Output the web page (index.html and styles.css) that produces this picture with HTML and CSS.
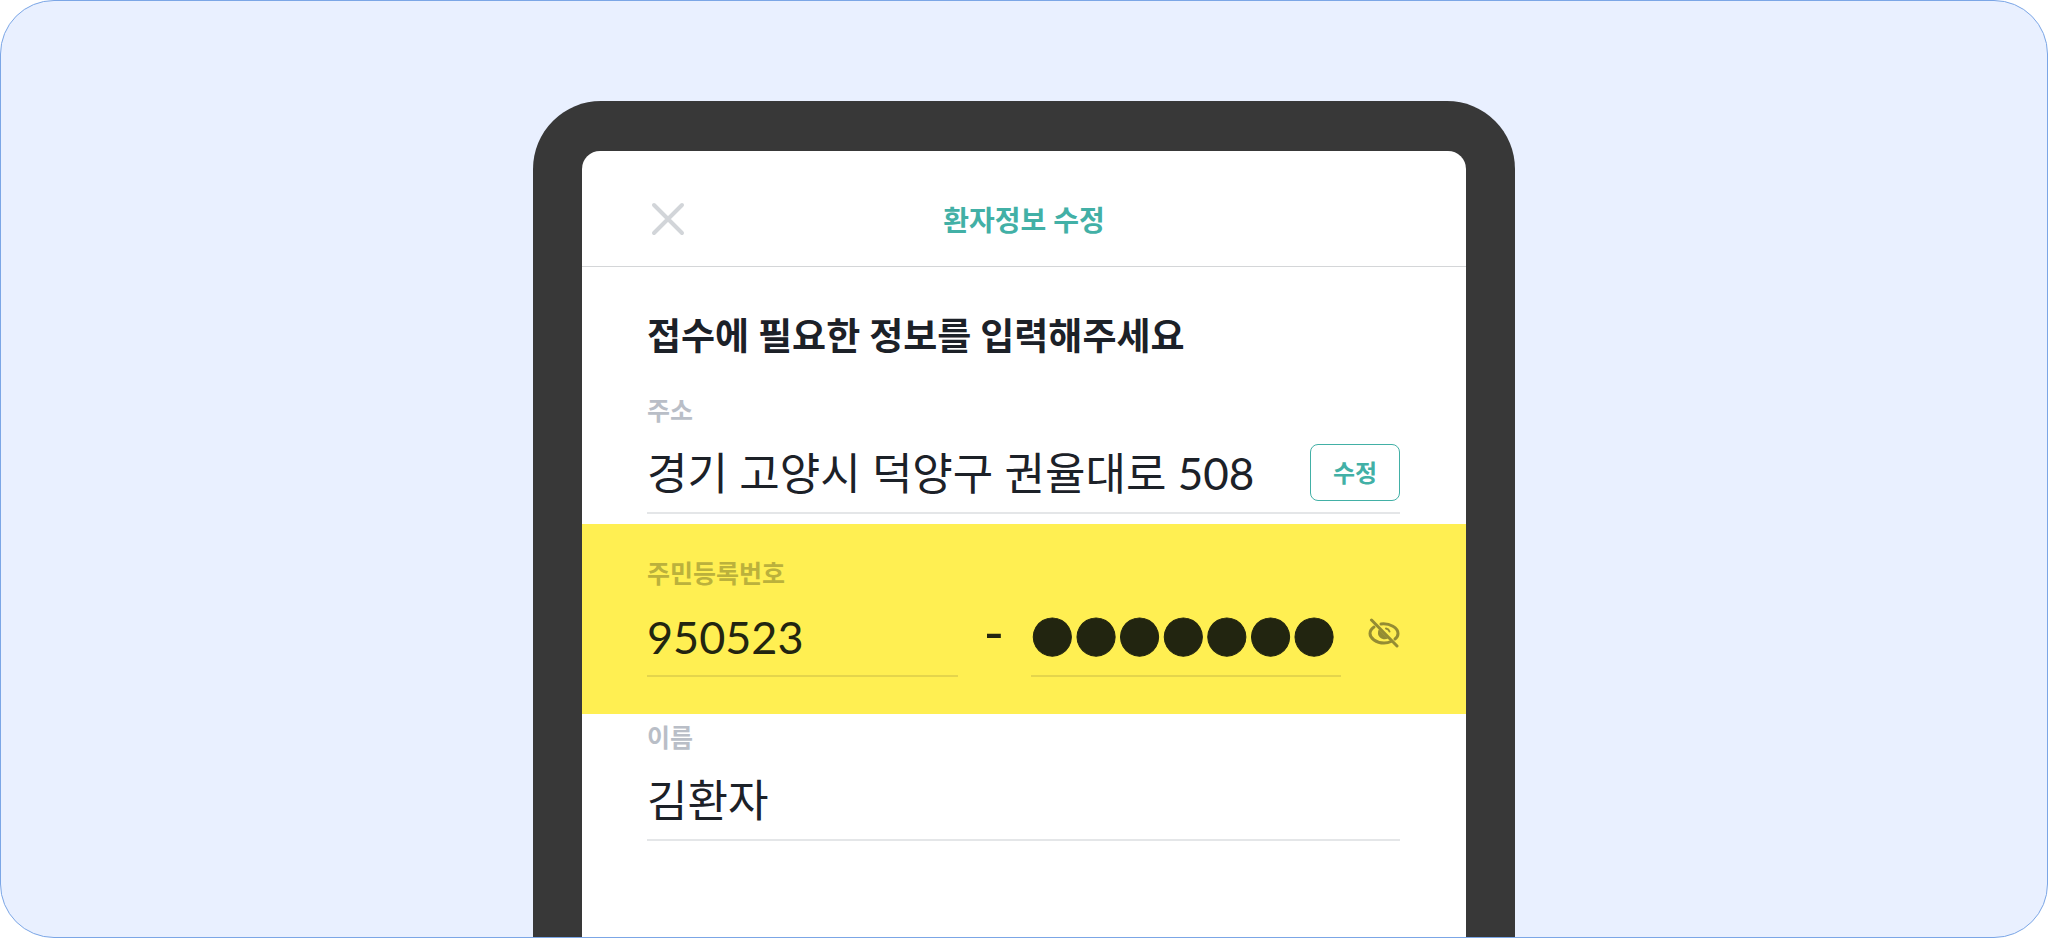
FILE: index.html
```html
<!DOCTYPE html>
<html lang="ko">
<head>
<meta charset="utf-8">
<meta name="viewport" content="width=device-width, initial-scale=1">
<title>환자정보 수정</title>
<link rel="stylesheet" href="styles.css">
</head>
<body>
<div class="stage">
  <main class="phone">
    <header class="topbar">
      <button type="button" class="close" aria-label="닫기">
        <svg width="34" height="34" viewBox="0 0 34 34" fill="none" stroke="#d2d5d9" stroke-width="4" stroke-linecap="round"><path d="M3 3l28 28M31 3L3 31"/></svg>
      </button>
      <h1>환자정보 수정</h1>
    </header>
    <form class="form">
      <h2>접수에 필요한 정보를 입력해주세요</h2>
      <div class="field">
        <label for="address">주소</label>
        <div class="row line">
          <input type="text" id="address" value="경기 고양시 덕양구 권율대로 508">
          <button type="button" class="edit">수정</button>
        </div>
      </div>
      <div class="field highlight">
        <label for="rrn-front">주민등록번호</label>
        <div class="row">
          <div class="part line"><input type="text" id="rrn-front" class="digits" value="950523"></div>
          <span class="dash">-</span>
          <div class="part line"><input type="text" class="masked" value="●●●●●●●" aria-label="주민등록번호 뒷자리"></div>
          <button type="button" class="eye" aria-label="번호 보기">
            <svg width="32" height="32" viewBox="0 0 32 32" fill="none" stroke="#948c33" stroke-width="3" stroke-linecap="round">
              <path d="M6 9C3 11 2 13 2 15.500C2 20 8 25 16 25C19 25 21 24.500 23 23.500"/>
              <path d="M13 6C22 5 30 10 30 15.500C30 18 29 19.500 27 21"/>
              <path d="M18 10.500C20 11 21 12 21.500 13.500" stroke-width="2"/>
              <path d="M11 11.500L20 20.500C15 23 10 19 10 15.500C10 14 10 12.500 11 11.500Z" fill="#948c33" stroke="none"/>
              <path d="M3.500 2L29 28"/>
            </svg>
          </button>
        </div>
      </div>
      <div class="field">
        <label for="name">이름</label>
        <div class="row line">
          <input type="text" id="name" value="김환자">
        </div>
      </div>
    </form>
  </main>
</div>
</body>
</html>
```
FILE: styles.css
```css
* { box-sizing: border-box; }
body {
  margin: 0;
  background: #fff;
  color: #1c2128;
  font-family: Lato, "Noto Sans CJK KR", sans-serif;
}
button { padding: 0; border: 0; background: none; font-family: inherit; }
svg { display: block; }

.stage {
  display: flex;
  justify-content: center;
  min-height: 100vh;
  padding-top: 100px;
  border: 1px solid #7ba6e6;
  border-radius: 54px;
  background: #e9f0ff;
  overflow: hidden;
}
.phone {
  width: 48%;
  border: 49px solid #383838;
  border-top-width: 50px;
  border-bottom: 0;
  border-radius: 68px 68px 0 0;
  background: #383838;
}

/* header */
.topbar {
  display: grid;
  grid-template-columns: 34px 1fr 34px;
  align-items: center;
  height: 116px;
  padding: 20px 69px 0;
  border-bottom: 1px solid #d4d6d8;
  border-radius: 18px 18px 0 0;
  background: #fff;
}
.topbar h1 {
  margin: 0;
  color: #42b0a6;
  font-size: 28px;
  font-weight: 700;
  text-align: center;
}

/* form */
.form { height: 100%; padding-top: 41px; background: #fff; }
.form h2 {
  margin: 0 65px 28px;
  font-size: 37px;
  font-weight: 700;
  line-height: 56px;
}
.field { padding: 0 66px 0 65px; }
.field label {
  display: block;
  color: #b9bec7;
  font-size: 25px;
  font-weight: 700;
  line-height: 36px;
}
.row { display: flex; align-items: center; height: 86px; }
.line { border-bottom: 2px solid #e4e6e8; }
input {
  flex: 1;
  width: 100%;
  min-width: 0;
  height: 84px;
  padding: 2px 0 0;
  border: 0;
  outline: 0;
  background: none;
  color: inherit;
  font-family: inherit;
  font-size: 44px;
}
.edit {
  width: 90px;
  height: 57px;
  margin-top: 4px;
  padding-bottom: 2px;
  border: 1px solid #42b0a6;
  border-radius: 8px;
  color: #42b0a6;
  font-size: 24px;
  font-weight: 700;
}

.highlight {
  margin: 10px 0 5px;
  padding-top: 31px;
  padding-bottom: 37px;
  background: #ffef52;
  color: #222510;
}
.highlight label { color: #bbb13c; }
.highlight .line { border-bottom: 2px solid #e4d54c; }
.part { flex: 1; height: 86px; }
.dash { width: 73px; padding-bottom: 6px; text-align: center; font-size: 56px; }
.digits { padding-top: 8px; font-size: 45px; }
.masked {
  padding-top: 0;
  font-family: "DejaVu Sans", sans-serif;
  font-size: 50px;
  -webkit-text-stroke: 1px #222510;
}
.eye { margin-left: 27px; }
```
